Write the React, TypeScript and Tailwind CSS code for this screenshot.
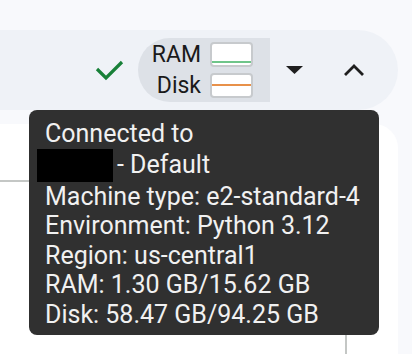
import { useState } from "react";

const details = [
  "Machine type: e2-standard-4",
  "Environment: Python 3.12",
  "Region: us-central1",
  "RAM: 1.30 GB/15.62 GB",
  "Disk: 58.47 GB/94.25 GB",
];

function MiniChart({ kind }: { kind: "ram" | "disk" }) {
  return (
    <div className="relative h-[25px] w-[43px] overflow-hidden rounded-[4px] border-2 border-[#c7cacd] bg-white">
      {kind === "ram" ? (
        <div className="absolute bottom-[2px] left-0 right-0 h-[2px] bg-[#6fc58a]" />
      ) : (
        <div className="absolute left-0 right-0 top-[9px] h-[2px] bg-[#e8914a]" />
      )}
    </div>
  );
}

export default function App() {
  const [open, setOpen] = useState(true);
  return (
    <div
      className="relative h-[354px] w-[412px] overflow-hidden bg-[#f8f9fc]"
      style={{ fontFamily: "Roboto, 'Noto Sans', sans-serif" }}
    >
      <div className="h-[30px]" />

      {/* Toolbar */}
      <div className="mr-[14px] flex h-[80px] items-center justify-end rounded-r-[40px] bg-[#eff2f7] pr-[33px]">
        <svg width="30" height="22" viewBox="0 0 30 22" fill="none" className="mr-[14px]">
          <path d="M3 10 L12 19 L28 3" stroke="#188038" strokeWidth="3.2" />
        </svg>

        <div className="flex h-[64px] w-[132px] flex-col justify-center gap-[6px] rounded-l-full bg-[#dde1e7] pr-[17px]">
          <div className="flex items-center justify-end gap-[9px]">
            <span className="text-[23px] leading-none text-[#1a1a1a]">RAM</span>
            <MiniChart kind="ram" />
          </div>
          <div className="flex items-center justify-end gap-[9px]">
            <span className="text-[23px] leading-none text-[#1a1a1a]">Disk</span>
            <MiniChart kind="disk" />
          </div>
        </div>

        <button className="ml-[15px] flex h-[40px] w-[18px] items-center justify-center">
          <svg width="17" height="8" viewBox="0 0 17 8">
            <polygon points="0,0 17,0 8.5,8" fill="#1f1f1f" />
          </svg>
        </button>

        <button
          onClick={() => setOpen(!open)}
          className="ml-[40px] flex h-[40px] w-[22px] items-center justify-center"
        >
          <svg width="22" height="14" viewBox="0 0 22 14" fill="none">
            <path d="M2 12 L11 3 L20 12" stroke="#1f1f1f" strokeWidth="2.8" />
          </svg>
        </button>
      </div>

      {/* Content panel */}
      <div className="mr-[14px] mt-[14px] flex h-[300px] rounded-tr-[24px] bg-white">
        <div className="w-[347px] border-r-2 border-[#c4c7c5]">
          <div className="h-[58px] border-b-2 border-[#c4c7c5]" />
        </div>
      </div>

      {/* Tooltip */}
      {open && (
        <div className="absolute left-[29px] top-[110px] h-[225px] w-[350px] rounded-[8px] bg-[#303030] pl-[16px] pt-[9px] text-[25px] leading-[29.5px] text-[#f1f1f1]">
          <div>Connected to</div>
          <div className="flex items-center">
            <span className="-ml-[8px] mr-[4px] inline-block h-[33px] w-[76px] bg-black" />
            <span>- Default</span>
          </div>
          {details.map((line) => (
            <div key={line}>{line}</div>
          ))}
        </div>
      )}
    </div>
  );
}
